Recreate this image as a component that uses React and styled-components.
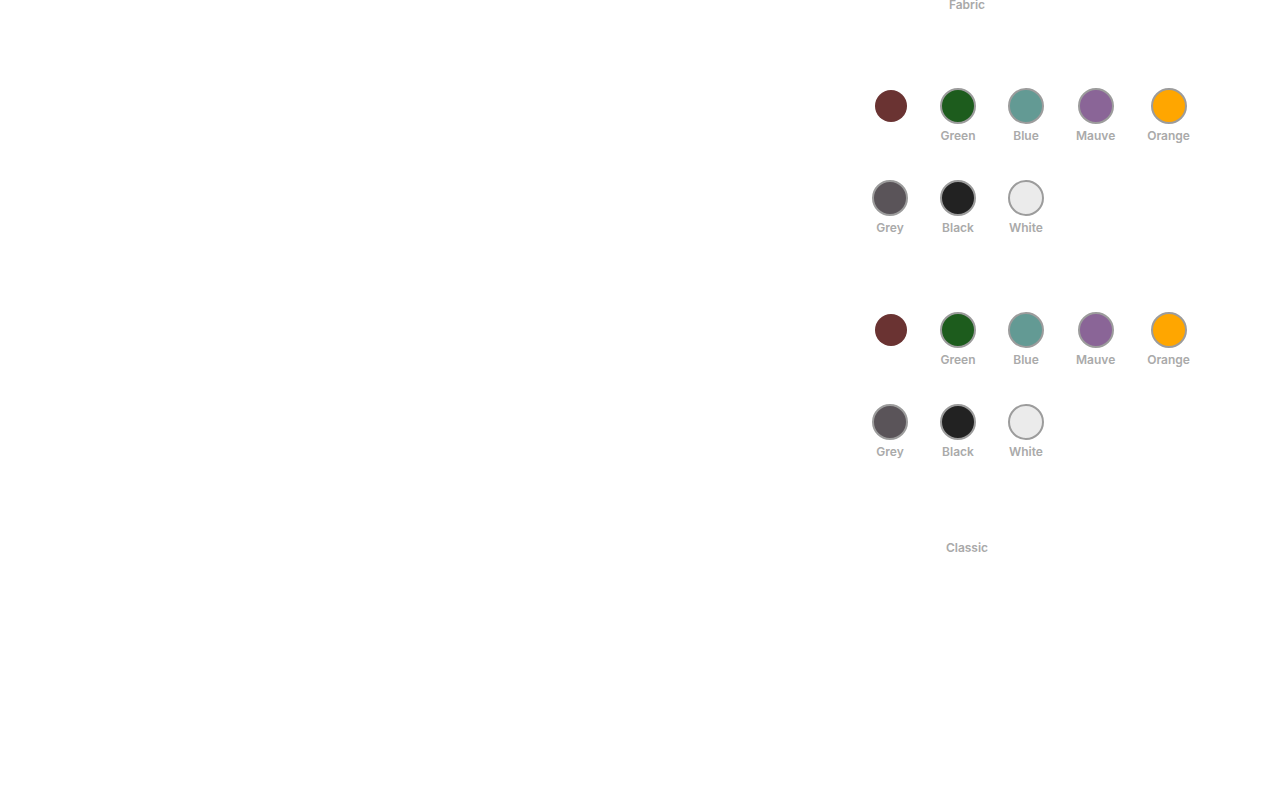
import styled, { createGlobalStyle } from "styled-components";

const GlobalStyle = createGlobalStyle`
	html, body {
		margin: 0;
		padding: 0;
		background: #fff;
		font-family: Inter, "Noto Sans", sans-serif;
	}
`;

const Page = styled.div`
	display: flex;
	justify-content: flex-start;
	height: 800px;
	overflow: hidden;
`;

const Panel = styled.section`
	margin-left: 872px;
	width: 340px;
	display: flex;
	flex-direction: column;
`;

const Heading = styled.h3`
	width: 190px;
	margin: ${(props) => props.$top}px 0 0;
	font-size: 12px;
	line-height: 14px;
	font-weight: 600;
	color: #a9a9a9;
	text-align: center;
`;

const SwatchGrid = styled.div`
	display: flex;
	flex-wrap: wrap;
	column-gap: 32px;
	row-gap: 37px;
	margin-top: ${(props) => props.$top}px;
`;

const SwatchItem = styled.div`
	display: flex;
	flex-direction: column;
	align-items: center;
	min-width: 36px;
`;

const Circle = styled.div`
	box-sizing: border-box;
	width: ${(props) => (props.$selected ? 32 : 36)}px;
	height: ${(props) => (props.$selected ? 32 : 36)}px;
	margin: ${(props) => (props.$selected ? "2px 1px 2px 3px" : "0")};
	border-radius: 50%;
	border: ${(props) => (props.$selected ? "none" : "2px solid #9c9c9c")};
	background-color: ${(props) => props.$color};
`;

const Label = styled.span`
	margin-top: 5px;
	font-size: 12px;
	line-height: 14px;
	font-weight: 600;
	color: #aaaaaa;
	white-space: nowrap;
`;

const colours = [
	{ name: "Red", color: "#6a3332", selected: true },
	{ name: "Green", color: "#1d5c1d" },
	{ name: "Blue", color: "#639a94" },
	{ name: "Mauve", color: "#8a6597" },
	{ name: "Orange", color: "#ffa600" },
	{ name: "Grey", color: "#5a5459" },
	{ name: "Black", color: "#222222" },
	{ name: "White", color: "#ebebeb" },
];

const Swatches = ({ top }) => (
	<SwatchGrid $top={top}>
		{colours.map((c) => (
			<SwatchItem key={c.name}>
				<Circle $color={c.color} $selected={c.selected} />
				{!c.selected && <Label>{c.name}</Label>}
			</SwatchItem>
		))}
	</SwatchGrid>
);

export default function App() {
	return (
		<Page>
			<GlobalStyle />
			<Panel>
				<Heading $top={-2}>Fabric</Heading>
				<Swatches top={76} />
				<Swatches top={77} />
				<Heading $top={82}>Classic</Heading>
			</Panel>
		</Page>
	);
}
